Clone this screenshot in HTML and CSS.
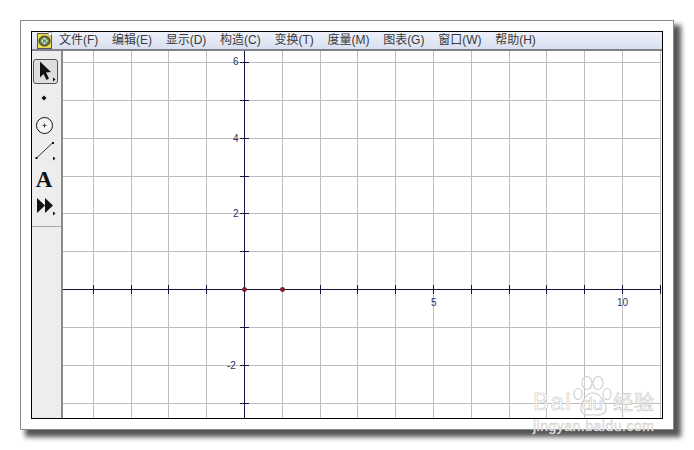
FILE: index.html
```html
<!DOCTYPE html>
<html lang="zh">
<head>
<meta charset="utf-8">
<title>几何画板</title>
<link rel="stylesheet" href="styles.css">
</head>
<body>
<div class="frame">
  <div class="window">
    <div class="menubar">
      <svg class="appicon" width="15" height="17" viewBox="0 0 15 17">
        <rect x="0.5" y="1.5" width="14" height="15" fill="#e6dc50" stroke="#555"/>
        <circle cx="13" cy="2" r="2" fill="#fff" stroke="#777" stroke-width=".6"/>
        <ellipse cx="7.5" cy="9" rx="5.5" ry="5" fill="#6d7a5a" stroke="#333"/>
        <path d="M7.5 5.5 11 9 7.500 12.500 4 9Z" fill="#e8edc8"/>
        <circle cx="7.5" cy="9" r="1.800" fill="#3aa07a"/>
      </svg>
      <span class="menu">文件(F)</span>
      <span class="menu">编辑(E)</span>
      <span class="menu">显示(D)</span>
      <span class="menu">构造(C)</span>
      <span class="menu">变换(T)</span>
      <span class="menu">度量(M)</span>
      <span class="menu">图表(G)</span>
      <span class="menu">窗口(W)</span>
      <span class="menu">帮助(H)</span>
    </div>
    <div class="body">
      <div class="toolbar">
        <div class="tools">
          <div class="tool tool-active">
            <svg width="25" height="25" viewBox="0 0 25 25"><path d="M7 2.500V18.500L10.500 15 13.500 21 16 19.500 13 13.500 18 13Z" fill="#111"/><path d="M20 18.500 22.500 20.500 20 22.500Z" fill="#111"/></svg>
          </div>
          <div class="tool">
            <svg width="25" height="25" viewBox="0 0 25 25"><path d="M11 9.500 13.500 12 11 14.500 8.500 12Z" fill="#111"/></svg>
          </div>
          <div class="tool">
            <svg width="25" height="25" viewBox="0 0 25 25"><circle cx="11.500" cy="12.500" r="8" fill="#f4f4f4" stroke="#111"/><path d="M11.500 10.500V14.500M9.500 12.500H13.500" stroke="#444"/></svg>
          </div>
          <div class="tool">
            <svg width="25" height="25" viewBox="0 0 25 25"><path d="M3.500 18 19.500 3" stroke="#333"/><rect x="2.500" y="17" width="2" height="2" fill="#111"/><rect x="19" y="2" width="2" height="2" fill="#111"/><path d="M20 16.500 22.500 18.500 20 20.500Z" fill="#111"/></svg>
          </div>
          <div class="tool tool-text">A</div>
          <div class="tool">
            <svg width="25" height="25" viewBox="0 0 25 25"><path d="M4 4 12 11.500 4 19ZM12 4 20 11.500 12 19Z" fill="#111"/><path d="M20 17.500 22.500 19.500 20 21.500Z" fill="#111"/></svg>
          </div>
        </div>
      </div>
      <svg class="canvas" width="598" height="367" viewBox="63 51 598 367">
        <g class="grid">
          <path d="M93.500 51V418M131.500 51V418M168.500 51V418M206.500 51V418M244.500 51V418M282.500 51V418M320.500 51V418M357.500 51V418M395.500 51V418M433.500 51V418M471.500 51V418M509.500 51V418M546.500 51V418M584.500 51V418M622.500 51V418M660.500 51V418"/>
          <path d="M63 62.500H661M63 100.500H661M63 138.500H661M63 176.500H661M63 213.500H661M63 251.500H661M63 327.500H661M63 365.500H661M63 403.500H661"/>
        </g>
        <g class="axes">
          <path d="M63 289.500H661M244.500 51V418"/>
          <path d="M93.500 285V294M131.500 285V294M168.500 285V294M206.500 285V294M320.500 285V294M357.500 285V294M395.500 285V294M433.500 285V294M471.500 285V294M509.500 285V294M546.500 285V294M584.500 285V294M622.500 285V294M660.500 285V294"/>
          <path d="M240 62.500H249M240 100.500H249M240 138.500H249M240 176.500H249M240 213.500H249M240 251.500H249M240 327.500H249M240 365.500H249M240 403.500H249"/>
        </g>
        <circle class="pt" cx="244.500" cy="289.500" r="2.200"/>
        <circle class="pt" cx="282.500" cy="289.500" r="2.200"/>
        <g class="labels">
          <text x="233" y="65">6</text>
          <text x="233" y="142">4</text>
          <text x="233" y="217">2</text>
          <text x="227" y="369">-2</text>
          <text x="431" y="306">5</text>
          <text x="617" y="306">10</text>
        </g>
      </svg>
    </div>
  </div>
  <div class="watermark">
    <svg class="paw" width="40" height="42" viewBox="0 0 40 42">
      <g fill="rgba(255,255,255,.35)" stroke="#cfcfcf" stroke-width="1.200">
        <ellipse cx="14" cy="8" rx="5" ry="6.500"/>
        <ellipse cx="25" cy="8" rx="5" ry="6.500"/>
        <ellipse cx="5" cy="19" rx="4" ry="5.500"/>
        <ellipse cx="34" cy="19" rx="4" ry="5.500"/>
        <path d="M20 18C13 18 9 27 8 32 7 40 15 41 20 39.500 25 41 34 40 33 32 32 27 27 18 20 18Z"/>
      </g>
    </svg>
    <div class="wm-main"><span class="wm-baidu">Bai</span><span class="wm-du">du</span><span class="wm-cn">经验</span></div>
    <div class="wm-url">jingyan.baidu.com</div>
  </div>
</div>
</body>
</html>
```
FILE: styles.css
```css
* { box-sizing: border-box; }
html, body { margin: 0; padding: 0; }
body {
  width: 694px;
  height: 450px;
  background: #fff;
  overflow: hidden;
  padding: 20px 0 0 20px;
  font-family: "Liberation Sans", "Noto Sans CJK SC", sans-serif;
}
.frame {
  position: relative;
  width: 654px;
  height: 410px;
  padding: 10px 10px 11px 10px;
  background: #fff;
  border: 1px solid #8a8a8a;
  box-shadow: 6px 6px 5px 1px #555;
}
.window {
  width: 632px;
  height: 388px;
  border: 1px solid #000;
  background: #fff;
  display: flex;
  flex-direction: column;
}
.menubar {
  height: 19px;
  flex: none;
  display: flex;
  align-items: center;
  gap: 13.700px;
  padding-left: 5px;
  font-size: 12px;
  color: #3a3a3a;
  white-space: nowrap;
  background: linear-gradient(#eef1fa, #d9dff0);
  border-bottom: 2px solid #808488;
}
.appicon { margin-right: -6.700px; flex: none; }
.menu { line-height: 17px; }
.body {
  flex: 1;
  display: flex;
  min-height: 0;
}
.toolbar {
  width: 31px;
  flex: none;
  background: #ededed;
  border-right: 2px solid #8a8a8a;
}
.tools {
  display: flex;
  flex-direction: column;
  height: 176px;
  padding: 8px 0 0 1px;
  gap: 2px;
  border-bottom: 1px solid #a8a8a8;
}
.tool {
  width: 25px;
  height: 25px;
  flex: none;
  display: flex;
  align-items: center;
  justify-content: flex-start;
}
.tool svg { flex: none; }
.tool-active {
  background: #dedede;
  border: 1px solid #555;
  border-radius: 3px;
}
.tool-active svg { margin: -1px; }
.tool-text {
  justify-content: center;
  padding-right: 3px;
  font-family: "Liberation Serif", serif;
  font-weight: bold;
  font-size: 23px;
  color: #111;
}
.canvas { flex: none; display: block; background: #fff; }
.grid path { fill: none; stroke: #bdbdbd; stroke-width: 1; }
.axes path { fill: none; stroke: #14143c; stroke-width: 1; }
.pt { fill: #8a1c1c; stroke: #5a1c2c; stroke-width: .5; }
.labels text {
  font-family: "Liberation Sans", sans-serif;
  font-size: 10px;
  fill: #30305c;
}
.watermark {
  position: absolute;
  left: 512px;
  top: 350px;
  width: 130px;
  height: 62px;
  color: #fff;
  pointer-events: none;
}
.paw { position: absolute; left: 40px; top: 4px; }
.wm-main {
  position: absolute;
  left: 0;
  top: 18px;
  width: 130px;
  display: flex;
  align-items: baseline;
  font-size: 24px;
  line-height: 26px;
  color: #fff;
  -webkit-text-stroke: .6px #c8c8c8;
}
.wm-baidu { width: 49px; letter-spacing: 1.500px; }
.wm-du { width: 31px; font-size: 19px; }
.wm-cn { font-size: 20px; letter-spacing: 1px; }
.wm-url {
  position: absolute;
  left: 0;
  top: 47px;
  font-size: 14px;
  line-height: 16px;
  color: #f4f4f4;
  letter-spacing: .5px;
  -webkit-text-stroke: .4px #c4c4c4;
}
```
